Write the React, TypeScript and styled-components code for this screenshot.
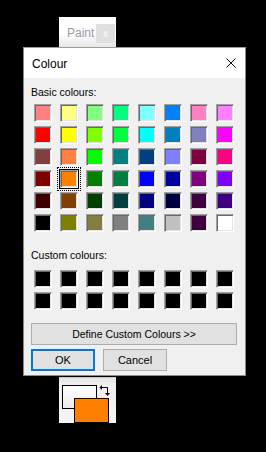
import React from "react";
import styled, { createGlobalStyle, css } from "styled-components";

const GlobalStyle = createGlobalStyle`
  html, body {
    margin: 0;
    padding: 0;
    background: #000;
  }
  body {
    font-family: "Liberation Sans", Arial, sans-serif;
    font-size: 10.5px;
    color: #000;
  }
`;

const basic = [
  ["#FF8080", "#FFFF80", "#80FF80", "#00FF80", "#80FFFF", "#0080FF", "#FF80C0", "#FF80FF"],
  ["#FF0000", "#FFFF00", "#80FF00", "#00FF40", "#00FFFF", "#0080C0", "#8080C0", "#FF00FF"],
  ["#804040", "#FF8040", "#00FF00", "#008080", "#004080", "#8080FF", "#800040", "#FF0080"],
  ["#800000", "#FF8000", "#008000", "#008040", "#0000FF", "#0000A0", "#800080", "#8000FF"],
  ["#400000", "#804000", "#004000", "#004040", "#000080", "#000040", "#400040", "#400080"],
  ["#000000", "#808000", "#808040", "#808080", "#408080", "#C0C0C0", "#400040", "#FFFFFF"],
];

const selected = "3-1";

export default function App() {
  return (
    <>
      <GlobalStyle />
      <Page>
        <Tab>
          <TabLabel>Paint</TabLabel>
          <TabClose>x</TabClose>
        </Tab>
        <Dialog>
          <TitleBar>
            <Title>Colour</Title>
            <CloseIcon width="10" height="10" viewBox="0 0 10 10">
              <path d="M0.5 0.5 L9.5 9.5 M9.5 0.5 L0.5 9.5" stroke="#000" strokeWidth="1" />
            </CloseIcon>
          </TitleBar>
          <Body>
            <Label>Basic colours:</Label>
            <SwatchGrid>
              {basic.map((row, r) =>
                row.map((c, i) => (
                  <Swatch key={`${r}-${i}`} $color={c} $selected={`${r}-${i}` === selected} />
                ))
              )}
            </SwatchGrid>
            <Label $top={17}>Custom colours:</Label>
            <SwatchGrid $top={8}>
              {Array.from({ length: 16 }).map((_, i) => (
                <Swatch key={i} $color="#000" />
              ))}
            </SwatchGrid>
            <WideButton>Define Custom Colours &gt;&gt;</WideButton>
            <ButtonRow>
              <Button $default>OK</Button>
              <Button>Cancel</Button>
            </ButtonRow>
          </Body>
        </Dialog>
        <ColourPanel>
          <Primary />
          <Secondary />
          <SwapIcon width="12" height="12" viewBox="0 0 12 12">
            <path d="M3 2.5 H8.5 V8" fill="none" stroke="#000" strokeWidth="1" />
            <path d="M0.5 2.5 L3 0 V5 Z" fill="#000" />
            <path d="M8.5 11 L6 8 H11 Z" fill="#000" />
          </SwapIcon>
        </ColourPanel>
      </Page>
    </>
  );
}

const Page = styled.div`
  display: flex;
  flex-direction: column;
  align-items: flex-start;
  width: 266px;
  height: 452px;
  background: #000;
`;

const Tab = styled.div`
  margin: 17px 0 0 59px;
  width: 57px;
  height: 30px;
  box-sizing: border-box;
  display: flex;
  align-items: center;
  justify-content: space-between;
  padding: 0 1px 0 8px;
  background: linear-gradient(#ffffff, #ffffff 55%, #e6e6e6);
`;

const TabLabel = styled.span`
  font-size: 12px;
  color: #9a98a8;
  margin-top: 1px;
`;

const TabClose = styled.span`
  width: 19px;
  height: 19px;
  margin-top: 3px;
  display: flex;
  align-items: center;
  justify-content: center;
  background: #e0e0e0;
  color: #f4f4f4;
  font-size: 10px;
  font-weight: bold;
`;

const Dialog = styled.div`
  margin-left: 23px;
  width: 223px;
  box-sizing: border-box;
  border: 1px solid #8a8a8a;
  border-top-color: #9a9a9a;
  background: #f0f0f0;
`;

const TitleBar = styled.div`
  height: 30px;
  background: #fff;
  display: flex;
  align-items: center;
  justify-content: space-between;
  padding: 0 9px 0 8px;
`;

const Title = styled.span`
  font-size: 12px;
  margin-top: 1px;
`;

const CloseIcon = styled.svg`
  display: block;
  margin-top: 0px;
`;

const Body = styled.div`
  padding: 8px 0 4px;
  display: flex;
  flex-direction: column;
`;

const Label = styled.div<{ $top?: number }>`
  height: 13px;
  line-height: 13px;
  padding-left: 7px;
  margin-top: ${(p) => p.$top ?? 0}px;
`;

const SwatchGrid = styled.div<{ $top?: number }>`
  display: grid;
  grid-template-columns: repeat(8, 18px);
  grid-auto-rows: 18px;
  column-gap: 8px;
  row-gap: 4px;
  padding-left: 10px;
  margin-top: ${(p) => p.$top ?? 5}px;
`;

const Swatch = styled.div<{ $color: string; $selected?: boolean }>`
  box-sizing: border-box;
  width: 18px;
  height: 18px;
  background: ${(p) => p.$color};
  border: 1px solid;
  border-color: #a0a0a0 #ffffff #ffffff #a0a0a0;
  box-shadow: inset 1px 1px 0 #696969, inset -1px -1px 0 #e3e3e3;
  ${(p) =>
    p.$selected &&
    css`
      box-shadow: 0 0 0 1px #000, inset 1px 1px 0 #696969, inset -1px -1px 0 #e3e3e3;
      outline: 1px dotted #000;
      outline-offset: 2px;
    `}
`;

const buttonBase = css`
  box-sizing: border-box;
  height: 22px;
  background: #e1e1e1;
  border: 1px solid #adadad;
  font-family: "Liberation Sans", Arial, sans-serif;
  font-size: 10.5px;
  color: #000;
  padding: 0;
  display: flex;
  align-items: center;
  justify-content: center;
`;

const WideButton = styled.button`
  ${buttonBase};
  margin: 13px 0 0 7px;
  width: 206px;
`;

const ButtonRow = styled.div`
  display: flex;
  gap: 8px;
  margin: 4px 0 0 7px;
`;

const Button = styled.button<{ $default?: boolean }>`
  ${buttonBase};
  width: 64px;
  font-size: 11px;
  ${(p) =>
    p.$default &&
    css`
      border: 2px solid #0078d7;
    `}
`;

const ColourPanel = styled.div`
  position: relative;
  margin: 1px 0 0 59px;
  width: 57px;
  height: 46px;
  background: linear-gradient(#e4e4e4, #f0f0f0 15%, #f4f4f4);
  border-top: 1px solid #c8c8c8;
  box-sizing: border-box;
`;

const Primary = styled.div`
  position: absolute;
  left: 3px;
  top: 7px;
  width: 35px;
  height: 24px;
  box-sizing: border-box;
  border: 1px solid #000;
  background: linear-gradient(#ffffff, #ececec);
`;

const Secondary = styled.div`
  position: absolute;
  left: 15px;
  top: 20px;
  width: 35px;
  height: 25px;
  box-sizing: border-box;
  border: 1px solid #000;
  background: #ff8000;
`;

const SwapIcon = styled.svg`
  position: absolute;
  left: 40px;
  top: 7px;
`;
